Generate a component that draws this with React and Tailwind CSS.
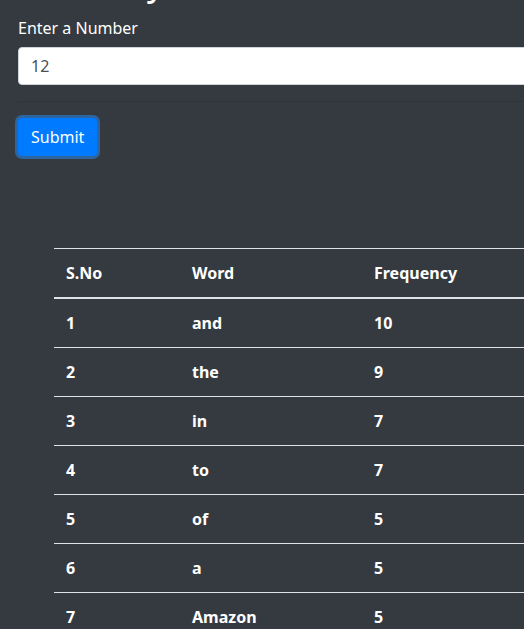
const rows = [
  [1, 'and', 10],
  [2, 'the', 9],
  [3, 'in', 7],
  [4, 'to', 7],
  [5, 'of', 5],
  [6, 'a', 5],
  [7, 'Amazon', 5],
]

export default function App() {
  return (
    <div className="min-h-screen w-full overflow-hidden bg-[#343a40] font-['Segoe_UI','Noto_Sans',sans-serif] text-white">
      <div className="w-[760px] px-[18px]">
        <h2 className="-mt-[35px] mb-[13px] pl-1 text-[32px] font-medium leading-[1.2]">Words by Count</h2>

        <form className="block">
          <label className="mb-[7px] block text-base leading-6">Enter a Number</label>
          <input
            type="text"
            defaultValue="12"
            className="block h-[38px] w-full rounded border border-[#ced4da] bg-white px-3 py-1.5 text-base leading-6 text-[#495057] outline-none"
          />
          <hr className="my-4 border-t border-black/10" />
          <button
            type="button"
            className="rounded border border-[#007bff] bg-[#007bff] px-3 py-1.5 text-base leading-6 text-white shadow-[0_0_0_3px_rgba(38,143,255,0.5)]"
          >
            Submit
          </button>
        </form>

        <table className="ml-9 mt-[92px] w-[700px] border-collapse text-left text-base font-bold leading-6">
          <thead>
            <tr>
              <th className="w-[126px] border-t border-b-2 border-[#dee2e6] p-3 align-bottom">S.No</th>
              <th className="w-[182px] border-t border-b-2 border-[#dee2e6] p-3 align-bottom">Word</th>
              <th className="border-t border-b-2 border-[#dee2e6] p-3 align-bottom">Frequency</th>
            </tr>
          </thead>
          <tbody>
            {rows.map(([n, word, freq]) => (
              <tr key={n}>
                <td className="border-t border-[#dee2e6] p-3">{n}</td>
                <td className="border-t border-[#dee2e6] p-3">{word}</td>
                <td className="border-t border-[#dee2e6] p-3">{freq}</td>
              </tr>
            ))}
          </tbody>
        </table>
      </div>
    </div>
  )
}
